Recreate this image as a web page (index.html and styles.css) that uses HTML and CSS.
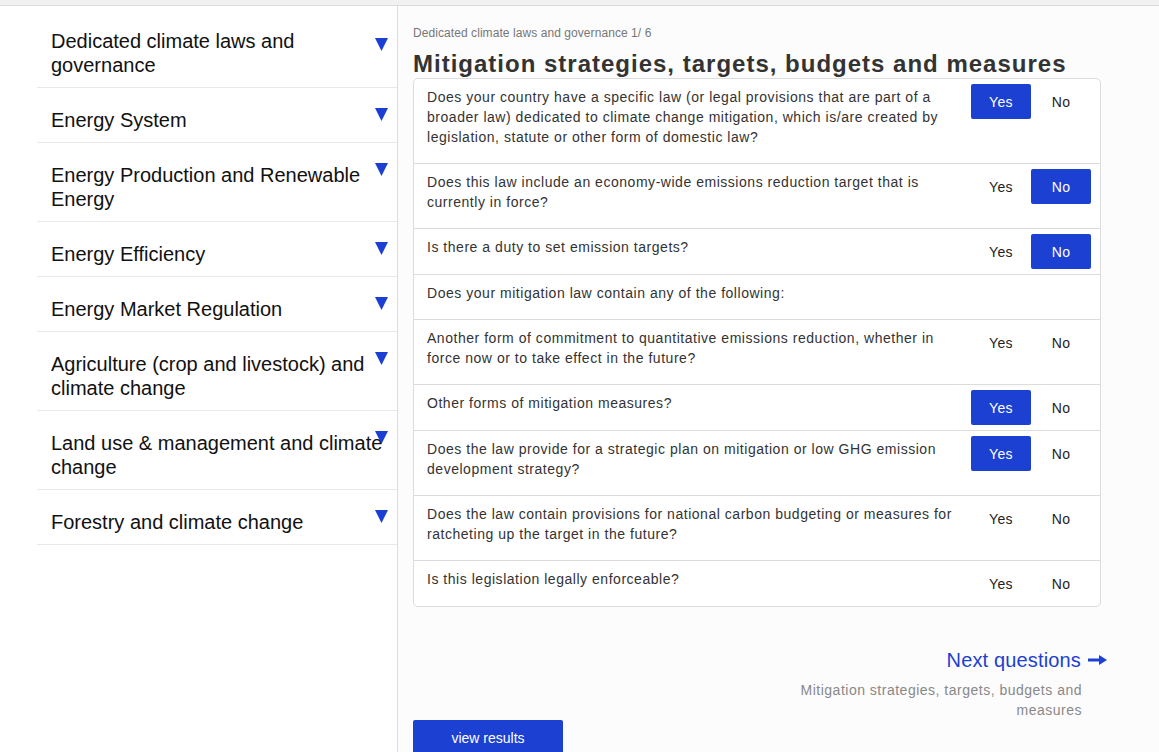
FILE: index.html
```html
<!DOCTYPE html>
<html lang="en">
<head>
<meta charset="utf-8">
<title>Climate law questionnaire</title>
<link rel="stylesheet" href="styles.css">
</head>
<body>
<div class="topbar"></div>
<div class="layout">
  <aside class="sidebar">
    <div class="nav-item nav-item--first"><span class="nav-text">Dedicated climate laws and governance</span><svg class="caret" viewBox="0 0 13 13" width="13" height="13"><polygon points="0,0 13,0 6.5,13"/></svg></div>
    <div class="nav-item"><span class="nav-text">Energy System</span><svg class="caret" viewBox="0 0 13 13" width="13" height="13"><polygon points="0,0 13,0 6.5,13"/></svg></div>
    <div class="nav-item"><span class="nav-text">Energy Production and Renewable Energy</span><svg class="caret" viewBox="0 0 13 13" width="13" height="13"><polygon points="0,0 13,0 6.5,13"/></svg></div>
    <div class="nav-item"><span class="nav-text">Energy Efficiency</span><svg class="caret" viewBox="0 0 13 13" width="13" height="13"><polygon points="0,0 13,0 6.5,13"/></svg></div>
    <div class="nav-item"><span class="nav-text">Energy Market Regulation</span><svg class="caret" viewBox="0 0 13 13" width="13" height="13"><polygon points="0,0 13,0 6.5,13"/></svg></div>
    <div class="nav-item"><span class="nav-text">Agriculture (crop and livestock) and climate change</span><svg class="caret" viewBox="0 0 13 13" width="13" height="13"><polygon points="0,0 13,0 6.5,13"/></svg></div>
    <div class="nav-item"><span class="nav-text">Land use &amp; management and climate change</span><svg class="caret" viewBox="0 0 13 13" width="13" height="13"><polygon points="0,0 13,0 6.5,13"/></svg></div>
    <div class="nav-item"><span class="nav-text">Forestry and climate change</span><svg class="caret" viewBox="0 0 13 13" width="13" height="13"><polygon points="0,0 13,0 6.5,13"/></svg></div>
  </aside>
  <main class="main">
    <div class="crumb">Dedicated climate laws and governance 1/ 6</div>
    <h1 class="title">Mitigation strategies, targets, budgets and measures</h1>
    <div class="card">
      <div class="row">
        <p class="question">Does your country have a specific law (or legal provisions that are part of a broader law) dedicated to climate change mitigation, which is/are created by legislation, statute or other form of domestic law?</p>
        <div class="answers"><span class="btn btn--on">Yes</span><span class="btn">No</span></div>
      </div>
      <div class="row">
        <p class="question">Does this law include an economy-wide emissions reduction target that is currently in force?</p>
        <div class="answers"><span class="btn">Yes</span><span class="btn btn--on">No</span></div>
      </div>
      <div class="row">
        <p class="question">Is there a duty to set emission targets?</p>
        <div class="answers"><span class="btn">Yes</span><span class="btn btn--on">No</span></div>
      </div>
      <div class="row">
        <p class="question">Does your mitigation law contain any of the following:</p>
      </div>
      <div class="row">
        <p class="question">Another form of commitment to quantitative emissions reduction, whether in force now or to take effect in the future?</p>
        <div class="answers"><span class="btn">Yes</span><span class="btn">No</span></div>
      </div>
      <div class="row">
        <p class="question">Other forms of mitigation measures?</p>
        <div class="answers"><span class="btn btn--on">Yes</span><span class="btn">No</span></div>
      </div>
      <div class="row">
        <p class="question">Does the law provide for a strategic plan on mitigation or low GHG emission development strategy?</p>
        <div class="answers"><span class="btn btn--on">Yes</span><span class="btn">No</span></div>
      </div>
      <div class="row">
        <p class="question">Does the law contain provisions for national carbon budgeting or measures for ratcheting up the target in the future?</p>
        <div class="answers"><span class="btn">Yes</span><span class="btn">No</span></div>
      </div>
      <div class="row">
        <p class="question">Is this legislation legally enforceable?</p>
        <div class="answers"><span class="btn">Yes</span><span class="btn">No</span></div>
      </div>
    </div>
    <div class="next">
      <a class="next-link" href="#">Next questions<svg class="arrow" viewBox="0 0 19 10" width="19" height="10"><rect x="0" y="3.5" width="13" height="3"/><polygon points="11,0 19,5 11,10"/></svg></a>
      <div class="next-sub">Mitigation strategies, targets, budgets and measures</div>
    </div>
    <div class="results">view results</div>
  </main>
</div>
</body>
</html>
```
FILE: styles.css
```css
* { box-sizing: border-box; }
html, body { margin: 0; padding: 0; }
body {
  font-family: "Liberation Sans", Arial, Helvetica, sans-serif;
  background: #fcfcfc;
  color: #333;
  overflow: hidden;
  height: 752px;
}
.topbar {
  height: 6px;
  background: #f1f1f1;
  border-bottom: 1px solid #dcdcdc;
}
.layout {
  display: flex;
  height: 746px;
}
.sidebar {
  width: 398px;
  flex: none;
  background: #fff;
  border-right: 1px solid #dcdcdc;
  padding: 3px 0 0 37px;
}
.nav-item {
  position: relative;
  padding: 20px 10px 10px 14px;
  border-bottom: 1px solid #e9e9e9;
  font-size: 20px;
  line-height: 24px;
  color: #111;
}
.caret {
  position: absolute;
  right: 9px;
  top: 20px;
  fill: #1b3fd3;
}
.nav-item--first .caret { top: 29px; }
.main {
  flex: 1;
  padding: 20px 58px 0 15px;
}
.crumb {
  font-size: 12px;
  line-height: 14px;
  color: #777;
  letter-spacing: 0.07px;
}
.title {
  margin: 9px 0 0;
  font-size: 24px;
  line-height: 29px;
  font-weight: bold;
  letter-spacing: 1px;
  color: #333;
  white-space: nowrap;
}
.card {
  background: #fff;
  border: 1px solid #dcdcdc;
  border-radius: 5px;
}
.row {
  display: flex;
  align-items: flex-start;
  padding: 5px 9px 5px 13px;
  border-bottom: 1px solid #dcdcdc;
}
.row:last-child { border-bottom: none; }
.question {
  flex: 1;
  margin: 0;
  padding: 3px 0 11px;
  font-size: 14px;
  line-height: 20px;
  letter-spacing: 0.53px;
  color: #333;
}
.answers {
  display: flex;
  flex: none;
  margin-left: 14px;
}
.btn {
  width: 60px;
  height: 35px;
  display: flex;
  align-items: center;
  justify-content: center;
  font-size: 14px;
  letter-spacing: 0.4px;
  color: #222;
  border-radius: 2px;
}
.btn--on {
  background: #1c40d1;
  color: #fff;
}
.next {
  display: flex;
  flex-direction: column;
  align-items: flex-end;
  margin-top: 41px;
}
.next-link {
  display: flex;
  align-items: center;
  gap: 7px;
  margin-right: -6px;
  font-size: 20px;
  line-height: 24px;
  letter-spacing: 0.15px;
  color: #1c40d1;
  text-decoration: none;
}
.arrow { fill: #1c40d1; }
.next-sub {
  margin-top: 8px;
  margin-right: 19px;
  max-width: 300px;
  text-align: right;
  font-size: 14px;
  line-height: 20px;
  letter-spacing: 0.5px;
  color: #888;
}
.results {
  width: 150px;
  height: 36px;
  display: flex;
  align-items: center;
  justify-content: center;
  background: #1c40d1;
  color: #fff;
  font-size: 14px;
  border-radius: 2px;
}
```
